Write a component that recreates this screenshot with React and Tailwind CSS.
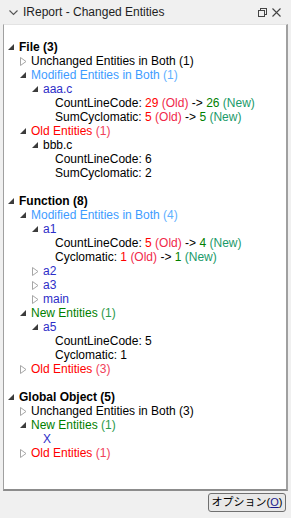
import React from "react";

const Exp = () => (
  <svg width="6" height="6" viewBox="0 0 6 6" className="shrink-0">
    <polygon points="6,0 6,6 0,6" fill="#3c3c3c" />
  </svg>
);
const Col = () => (
  <svg width="7" height="9" viewBox="0 0 7 9" className="shrink-0">
    <polygon points="0.5,0.5 6,4.5 0.5,8.5" fill="none" stroke="#a6a6a6" strokeWidth="1" />
  </svg>
);

const Row = ({ level, icon, children, bold }) => (
  <div
    className={"flex h-[14px] items-center whitespace-nowrap " + (bold ? "font-bold" : "")}
    style={{ paddingLeft: 4 + level * 12 }}
  >
    <span className="flex w-[11px] shrink-0 items-center">
      {icon === "e" ? <Exp /> : icon === "c" ? <Col /> : null}
    </span>
    <span>{children}</span>
  </div>
);

const R = ({ c }) => <span className="text-[#ff0000]">{c}</span>;
const RO = () => <span className="text-[#f0284a]">(Old)</span>;
const G = ({ c }) => <span className="text-[#008000]">{c}</span>;
const GN = () => <span className="text-[#1a9a6a]">(New)</span>;
const Blue = ({ c }) => <span className="text-[#2d2dc8]">{c}</span>;

const Mod = ({ n }) => (
  <span>
    <span className="text-[#3e9cff]">Modified Entities in Both </span>
    <span className="text-[#5fb0ff]">({n})</span>
  </span>
);
const Old = ({ n }) => (
  <span>
    <span className="text-[#ff0000]">Old Entities </span>
    <span className="text-[#f0405a]">({n})</span>
  </span>
);
const New = ({ n }) => (
  <span>
    <span className="text-[#008000]">New Entities </span>
    <span className="text-[#2a9a4a]">({n})</span>
  </span>
);

export default function App() {
  return (
    <div
      className="relative h-[518px] w-[291px] overflow-hidden bg-[#f0f0f0] text-[12px] text-black"
      style={{ fontFamily: '"Liberation Sans", Arial, "Noto Sans CJK JP", sans-serif' }}
    >
      <div className="flex h-[24px] items-center pl-[9px] pr-[10px]">
        <svg width="9" height="6" viewBox="0 0 9 6" className="mr-[5px] mt-[1px]">
          <polyline points="0.5,0.5 4.5,4.5 8.5,0.5" fill="none" stroke="#555" strokeWidth="1.1" />
        </svg>
        <span className="text-[#1e1e1e]">IReport - Changed Entities</span>
        <div className="ml-auto flex items-center gap-[5px]">
          <svg width="9" height="9" viewBox="0 0 9 9">
            <rect x="2.5" y="0.5" width="6" height="6" fill="none" stroke="#444" />
            <rect x="0.5" y="2.5" width="6" height="6" fill="#f0f0f0" stroke="#444" />
          </svg>
          <svg width="9" height="9" viewBox="0 0 9 9">
            <path d="M0.5 0.5 L8.5 8.5 M8.5 0.5 L0.5 8.5" stroke="#444" strokeWidth="1.1" />
          </svg>
        </div>
      </div>
      <div className="mx-[3px] h-[467px] border-l border-t border-l-[#a0a0a0] border-t-[#e3e3e3] border-r-[2px] border-r-[#a0a0a0] border-b-[2px] border-b-[#8c8c8c] bg-white pt-[15px]">
        <Row level={0} icon="e" bold>File (3)</Row>
        <Row level={1} icon="c">Unchanged Entities in Both (1)</Row>
        <Row level={1} icon="e"><Mod n={1} /></Row>
        <Row level={2} icon="e"><Blue c="aaa.c" /></Row>
        <Row level={3}>CountLineCode: <R c="29" /> <RO /> -&gt; <G c="26" /> <GN /></Row>
        <Row level={3}>SumCyclomatic: <R c="5" /> <RO /> -&gt; <G c="5" /> <GN /></Row>
        <Row level={1} icon="e"><Old n={1} /></Row>
        <Row level={2} icon="e">bbb.c</Row>
        <Row level={3}>CountLineCode: 6</Row>
        <Row level={3}>SumCyclomatic: 2</Row>
        <div className="h-[14px]" />
        <Row level={0} icon="e" bold>Function (8)</Row>
        <Row level={1} icon="e"><Mod n={4} /></Row>
        <Row level={2} icon="e"><Blue c="a1" /></Row>
        <Row level={3}>CountLineCode: <R c="5" /> <RO /> -&gt; <G c="4" /> <GN /></Row>
        <Row level={3}>Cyclomatic: <R c="1" /> <RO /> -&gt; <G c="1" /> <GN /></Row>
        <Row level={2} icon="c"><Blue c="a2" /></Row>
        <Row level={2} icon="c"><Blue c="a3" /></Row>
        <Row level={2} icon="c"><Blue c="main" /></Row>
        <Row level={1} icon="e"><New n={1} /></Row>
        <Row level={2} icon="e"><Blue c="a5" /></Row>
        <Row level={3}>CountLineCode: 5</Row>
        <Row level={3}>Cyclomatic: 1</Row>
        <Row level={1} icon="c"><Old n={3} /></Row>
        <div className="h-[14px]" />
        <Row level={0} icon="e" bold>Global Object (5)</Row>
        <Row level={1} icon="c">Unchanged Entities in Both (3)</Row>
        <Row level={1} icon="e"><New n={1} /></Row>
        <Row level={2}><Blue c="X" /></Row>
        <Row level={1} icon="c"><Old n={1} /></Row>
      </div>
      <div className="flex justify-end pr-[5px] pt-[2px]">
        <button className="flex h-[19px] w-[78px] items-center justify-center whitespace-nowrap rounded-[3px] border border-[#707070] bg-[#e8e8e8] text-[11px] leading-none text-black">
          オプション(<span className="text-[#1a1a8c] underline">O</span>)
        </button>
      </div>
    </div>
  );
}
